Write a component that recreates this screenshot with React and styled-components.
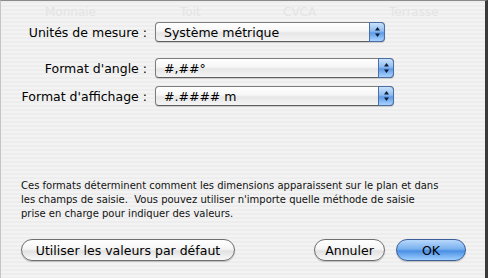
import React from "react";
import styled, { createGlobalStyle } from "styled-components";

const GlobalStyle = createGlobalStyle`
  html, body {
    margin: 0;
    padding: 0;
    background: #ececec;
  }
  body {
    font-family: "DejaVu Sans", "Liberation Sans", sans-serif;
  }
`;

const Sheet = styled.div`
  position: relative;
  box-sizing: border-box;
  width: 488px;
  height: 278px;
  overflow: hidden;
  border-top: 1px solid #8a8a8a;
  border-right: 3px solid #3a3a3a;
  border-left: 1px solid #c4c4c4;
  background: repeating-linear-gradient(
    to bottom,
    #ededed 0px,
    #ededed 2px,
    #f3f3f3 2px,
    #f3f3f3 4px
  );
  display: flex;
  flex-direction: column;
`;

const GhostTabs = styled.div`
  display: flex;
  height: 21px;
  padding-left: 44px;
  align-items: center;
  font-size: 12px;
  color: #e4e4e4;
`;

const GhostTab = styled.span`
  width: ${(p) => p.w}px;
`;

const Form = styled.div`
  display: grid;
  grid-template-columns: 146px auto;
  column-gap: 8px;
  align-items: center;
  justify-items: start;
`;

const Label = styled.label`
  justify-self: end;
  font-size: 12.5px;
  color: #000;
  white-space: nowrap;
  margin-top: ${(p) => p.mt || 0}px;
`;

const Popup = styled.div`
  position: relative;
  box-sizing: border-box;
  width: ${(p) => p.w}px;
  height: 20px;
  margin-top: ${(p) => p.mt || 0}px;
  border: 1px solid #7c7c7c;
  border-bottom-color: #5e5e5e;
  border-radius: 4px;
  background: linear-gradient(to bottom, #ffffff 0%, #f6f6f6 45%, #e6e6e6 55%, #f4f4f4 100%);
  box-shadow: 0 1px 1px rgba(0, 0, 0, 0.15);
  display: flex;
  align-items: center;
  padding-left: 8px;
  font-size: 12.5px;
  color: #000;
`;

const Stepper = styled.div`
  position: absolute;
  top: -1px;
  right: -1px;
  bottom: -1px;
  width: 14px;
  border: 1px solid #4a6fa8;
  border-radius: 0 4px 4px 0;
  background: linear-gradient(to bottom, #c9e1fb 0%, #8fbdf0 45%, #5e9ae6 55%, #a9d3ff 100%);
  display: flex;
  align-items: center;
  justify-content: center;
`;

const Note = styled.p`
  margin: auto 0 0 0;
  padding: 0 20px;
  font-size: 10px;
  line-height: 14px;
  color: #111;
  white-space: nowrap;
`;

const Footer = styled.div`
  display: flex;
  align-items: center;
  padding: 18px 19px 17px 20px;
`;

const Spacer = styled.div`
  flex: 1;
`;

const Button = styled.button`
  box-sizing: border-box;
  height: 22px;
  width: ${(p) => p.w}px;
  margin-left: ${(p) => p.ml || 0}px;
  border-radius: 11px;
  border: 1px solid ${(p) => (p.primary ? "#3c5f9a" : "#6e6e6e")};
  background: ${(p) =>
    p.primary
      ? "linear-gradient(to bottom, #b8d8fb 0%, #79b1ef 45%, #4a8fe4 55%, #9fd0ff 100%)"
      : "linear-gradient(to bottom, #ffffff 0%, #f5f5f5 45%, #e2e2e2 55%, #f8f8f8 100%)"};
  box-shadow: 0 1px 1px rgba(0, 0, 0, 0.2);
  font-family: "DejaVu Sans", "Liberation Sans", sans-serif;
  font-size: 12.5px;
  color: #000;
  padding: 0;
`;

function Arrows() {
  return (
    <svg width="7" height="12" viewBox="0 0 7 12">
      <path d="M3.5 1 L6 4.5 L1 4.5 Z" fill="#0d1d33" />
      <path d="M3.5 11 L6 7.5 L1 7.5 Z" fill="#0d1d33" />
    </svg>
  );
}

function Select({ w, mt, children }) {
  return (
    <Popup w={w} mt={mt}>
      {children}
      <Stepper>
        <Arrows />
      </Stepper>
    </Popup>
  );
}

export default function App() {
  return (
    <>
      <GlobalStyle />
      <Sheet>
        <GhostTabs>
          <GhostTab w={135}>Monnaie</GhostTab>
          <GhostTab w={103}>Toit</GhostTab>
          <GhostTab w={106}>CVCA</GhostTab>
          <GhostTab w={60}>Terrasse</GhostTab>
        </GhostTabs>

        <Form>
          <Label>Unités de mesure :</Label>
          <Select w={230}>Système métrique</Select>

          <Label mt={16}>Format d'angle :</Label>
          <Select w={239} mt={16}>#,##°</Select>

          <Label mt={8}>Format d'affichage :</Label>
          <Select w={239} mt={8}>#.#### m</Select>
        </Form>

        <Note>
          Ces formats déterminent comment les dimensions apparaissent sur le plan et dans
          <br />
          les champs de saisie.&nbsp; Vous pouvez utiliser n'importe quelle méthode de saisie
          <br />
          prise en charge pour indiquer des valeurs.
        </Note>

        <Footer>
          <Button w={214}>Utiliser les valeurs par défaut</Button>
          <Spacer />
          <Button w={71}>Annuler</Button>
          <Button w={70} ml={11} primary>
            OK
          </Button>
        </Footer>
      </Sheet>
    </>
  );
}
